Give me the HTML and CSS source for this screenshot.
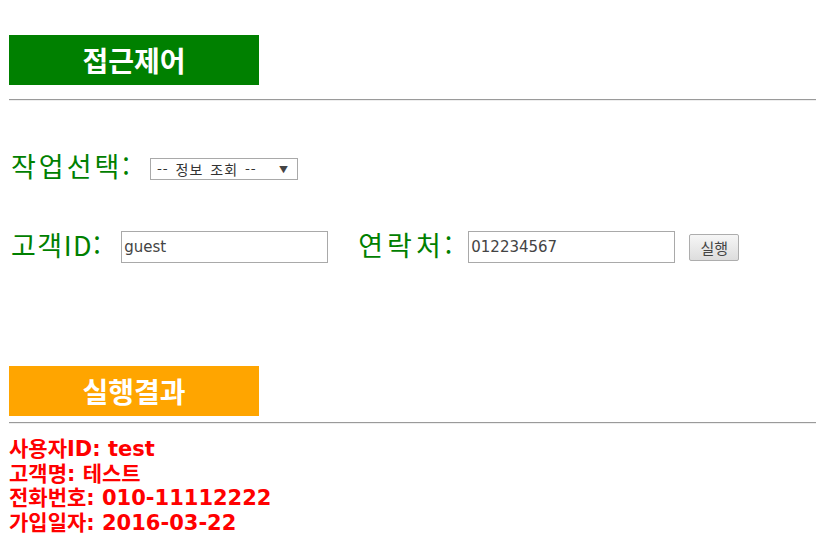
FILE: index.html
```html
<!DOCTYPE html>
<html lang="ko">
<head>
<meta charset="utf-8">
<link rel="stylesheet" href="styles.css">
</head>
<body>
<div class="banner banner-green">접근제어</div>
<hr class="rule">
<div class="row row-task">
  <span class="label label-task">작업선택:</span>
  <div class="select"><span class="select-text">-- 정보 조회 --</span><span class="select-arrow">▼</span></div>
</div>
<div class="row row-form">
  <span class="label label-id">고객ID:</span>
  <input class="field" type="text" value="guest">
  <span class="label label-gap">연락처:</span>
  <input class="field" type="text" value="012234567">
  <button class="btn" type="button">실행</button>
</div>
<div class="banner banner-orange">실행결과</div>
<hr class="rule rule-result">
<div class="result">
  <div>사용자ID: test</div>
  <div>고객명: 테스트</div>
  <div>전화번호: 010-11112222</div>
  <div>가입일자: 2016-03-22</div>
</div>
</body>
</html>
```
FILE: styles.css
```css
html, body {
  margin: 0;
  padding: 0;
  background: #fff;
}
body {
  padding: 35px 0 0 9px;
  font-family: "DejaVu Sans", "Noto Sans CJK KR", sans-serif;
}
.banner {
  width: 250px;
  height: 50px;
  display: flex;
  align-items: center;
  justify-content: center;
  color: #fff;
  font-family: "Noto Sans CJK KR", sans-serif;
  font-weight: bold;
  font-size: 28px;
  line-height: 1;
}
.banner-green { background: #008000; }
.banner-orange { background: #ffa500; margin-top: 100px; }
.rule {
  margin: 14px 0 0 0;
  height: 0;
  border: none;
  border-top: 1px solid #9a9a9a;
  border-bottom: 1px solid #eeeeee;
}
.rule-result { margin-top: 6px; }
.row {
  display: flex;
  align-items: center;
}
.row-task {
  margin-top: 48px;
  height: 38px;
}
.row-form {
  margin-top: 41px;
  height: 38px;
}
.label {
  color: #008000;
  font-family: "Noto Sans CJK KR", sans-serif;
  font-size: 27px;
  letter-spacing: 1.5px;
  padding-left: 2px;
  margin-right: 17px;
  line-height: 1;
  margin-top: -6px;
}
.label-task { letter-spacing: 3px; margin-right: 17px; }
.label-id { margin-right: 19px; }
.label-gap { margin-left: 28px; letter-spacing: 4px; margin-right: 12px; }
.select {
  display: flex;
  align-items: center;
  justify-content: space-between;
  padding: 0 8px 0 6px;
  box-sizing: border-box;
  width: 148px;
  height: 22px;
  border: 1px solid #a9a9a9;
  font-size: 14px;
  letter-spacing: 1px;
  word-spacing: 2px;
  color: #333;
  font-family: "Noto Sans CJK KR", sans-serif;
  margin-top: 2px;
}
.select-arrow { font-size: 9px; color: #444; }
.field {
  width: 207px;
  height: 32px;
  box-sizing: border-box;
  border: 1px solid #a9a9a9;
  padding: 0 2px;
  font-family: "DejaVu Sans", "Noto Sans CJK KR", sans-serif;
  font-size: 15px;
  color: #444;
  margin: 0;
}
.btn {
  margin-left: 14px;
  width: 50px;
  height: 27px;
  border: 1px solid #adadad;
  border-radius: 2px;
  background: linear-gradient(#f6f6f6, #dddddd);
  font-family: "Noto Sans CJK KR", sans-serif;
  font-size: 15px;
  color: #444;
  padding: 0;
}
.result {
  margin-top: 13px;
  color: #ff0000;
  font-weight: bold;
  font-size: 21px;
  line-height: 24.5px;
  padding-left: 0;
}
```
